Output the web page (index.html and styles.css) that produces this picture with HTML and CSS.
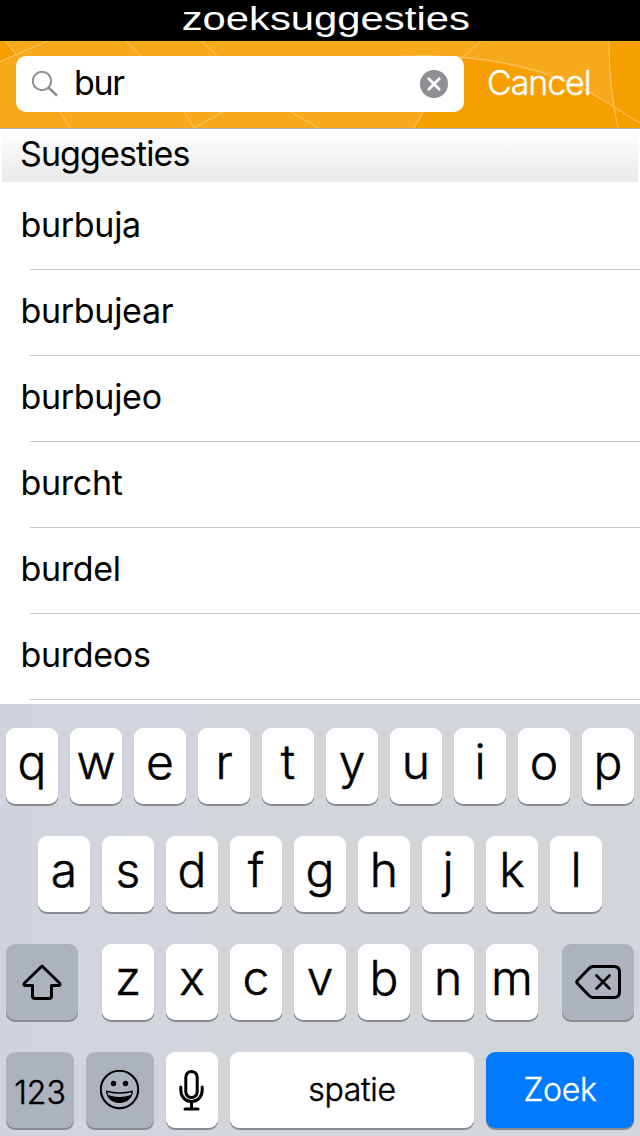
FILE: index.html
```html
<!DOCTYPE html>
<html lang="nl">
<head>
    <meta charset="UTF-8">
    <meta name="viewport" content="width=device-width, initial-scale=1.0">
    <title>zoeksuggesties</title>
    <link rel="stylesheet" href="styles.css">
</head>
<body>
    <div class="title-bar"><h1>zoeksuggesties</h1></div>

    <div class="search-bar">
        <svg class="pattern" width="640" height="87" viewBox="0 41 640 87">
            <rect y="41" width="640" height="87" fill="#f7a91c"/>
            <path d="M0 41H5L16 54L0 61Z" fill="#f59f00"/>
            <path d="M414 128L460 58Q545 67 614 107L640 123V128Z" fill="#f59f00"/>
            <path d="M609 41H640V128H618Q609 90 609 41Z" fill="#f59f00"/>
            <path class="lines" d="M5 41L16 54L60 112L70 128M0 61.500L48 41M126 41L141 56L184 112L194 128L223 112M202 41L217 56L291 112L319 128M481 41L460 60L423 112L414 128M609 41Q609 88 618 128M392 56.500Q530 49 614 107L640 123"/>
        </svg>
        <div class="search-field">
            <svg class="search-icon" width="28" height="28" viewBox="0 0 28 28">
                <circle cx="10" cy="11" r="9.200"/>
                <path d="M16.500 17.500L25 25.800"/>
            </svg>
            <span class="query">bur</span>
            <svg class="clear-icon" width="28" height="28" viewBox="0 0 28 28">
                <circle cx="14" cy="14" r="14"/>
                <path d="M8.800 8.800L19.200 19.200M19.200 8.800L8.800 19.200"/>
            </svg>
        </div>
        <span class="cancel">Cancel</span>
    </div>

    <h2 class="section-title">Suggesties</h2>
    <ul class="suggestions">
        <li>burbuja</li>
        <li>burbujear</li>
        <li>burbujeo</li>
        <li>burcht</li>
        <li>burdel</li>
        <li>burdeos</li>
    </ul>

    <div class="keyboard">
        <div class="key-row">
            <div class="key">q</div><div class="key">w</div><div class="key">e</div><div class="key">r</div><div class="key">t</div><div class="key">y</div><div class="key">u</div><div class="key">i</div><div class="key">o</div><div class="key">p</div>
        </div>
        <div class="key-row">
            <div class="key">a</div><div class="key">s</div><div class="key">d</div><div class="key">f</div><div class="key">g</div><div class="key">h</div><div class="key">j</div><div class="key">k</div><div class="key">l</div>
        </div>
        <div class="key-row">
            <div class="key dark shift">
                <svg width="40" height="36" viewBox="0 0 40 36">
                    <path d="M20 2L37.500 19Q39 21.500 36 21.500H29.500V32Q29.500 34.500 27 34.500H13Q10.500 34.500 10.500 32V21.500H4Q1 21.500 2.500 19Z"/>
                </svg>
            </div>
            <div class="key">z</div><div class="key">x</div><div class="key">c</div><div class="key">v</div><div class="key">b</div><div class="key">n</div><div class="key">m</div>
            <div class="key dark delete">
                <svg width="46" height="36" viewBox="0 0 46 36">
                    <path d="M18 2.500H39Q44.500 2.500 44.500 8V28Q44.500 33.500 39 33.500H18Q16 33.500 14 31.500L2.500 19.500Q1 18 2.500 16.500L14 4.500Q16 2.500 18 2.500Z"/>
                    <path d="M21.500 11.500L34.500 24.500M34.500 11.500L21.500 24.500" stroke-width="2.600"/>
                </svg>
            </div>
        </div>
        <div class="key-row">
            <div class="key dark numbers">123</div>
            <div class="key dark emoji">
                <svg width="40" height="40" viewBox="0 0 40 40">
                    <circle class="face" cx="19.500" cy="19.500" r="18.700"/>
                    <circle class="solid" cx="13.500" cy="13.500" r="2.700"/>
                    <circle class="solid" cx="25.500" cy="13.500" r="2.700"/>
                    <path class="solid" d="M6 20.500Q19.500 24 33 20.500C33 28 27 33 19.500 33S6 28 6 20.500Z"/>
                    <path class="teeth" d="M7.500 22.300Q19.500 25.300 31.500 22.300L30.800 25Q19.500 29 8.200 25Z"/>
                </svg>
            </div>
            <div class="key mic">
                <svg width="26" height="42" viewBox="0 0 26 42">
                    <rect x="6.800" y="2.500" width="11.400" height="26" rx="5.700"/>
                    <path d="M1.800 18V21C1.800 28 6.500 32.500 12.500 32.500S23.200 28 23.200 21V18M12.500 33V40M6 40H19"/>
                </svg>
            </div>
            <div class="key space">spatie</div>
            <div class="key blue">Zoek</div>
        </div>
    </div>
</body>
</html>
```
FILE: styles.css
```css
* {
    box-sizing: border-box;
}
body {
    margin: 0;
    width: 640px;
    height: 1136px;
    overflow: hidden;
    background-color: #fff;
    color: #000;
    font-family: Inter, "Liberation Sans", sans-serif;
    font-size: 34px;
}
.title-bar {
    height: 41px;
    padding-left: 12px;
    background-color: #000;
    color: #fff;
    display: flex;
    justify-content: center;
}
.title-bar h1 {
    margin: 0;
    font: 33px/37px "Liberation Sans", Arial, sans-serif;
    transform: scaleX(1.267);
}
.search-bar {
    position: relative;
    height: 88px;
    padding: 15px 16px 0;
    display: flex;
    gap: 23px;
    border-bottom: 1px solid #b2b2b2;
}
.pattern {
    position: absolute;
    top: 0;
    left: 0;
    z-index: -1;
}
.pattern .lines {
    fill: none;
    stroke: #fbc76a;
}
.search-field {
    width: 448px;
    height: 56px;
    padding: 0 16px;
    display: flex;
    align-items: center;
    background-color: #fff;
    border-radius: 10px;
}
.search-icon {
    fill: none;
    stroke: #8e8e93;
    stroke-width: 2;
}
.search-icon path {
    stroke-width: 2.6;
}
.query {
    flex: 1;
    height: 56px;
    margin-left: 14px;
    line-height: 53px;
    letter-spacing: -1.3px;
}
.clear-icon {
    fill: #8e8e93;
}
.clear-icon path {
    stroke: #fff;
    stroke-width: 2.8;
    stroke-linecap: round;
}
.cancel {
    color: #fff;
    font-weight: 300;
    line-height: 53px;
    letter-spacing: -1.1px;
    -webkit-text-stroke: 0.4px #fff;
}
.section-title {
    height: 52px;
    margin: 1px 2px 2px;
    padding-left: 18px;
    font-size: 34px;
    font-weight: 400;
    line-height: 47px;
    letter-spacing: -0.9px;
    background: linear-gradient(#fff, #e9e9e9);
}
.suggestions {
    height: 520px;
    margin: 0;
    padding: 0 0 0 30px;
    list-style: none;
}
.suggestions li {
    height: 86px;
    line-height: 81px;
    letter-spacing: -0.3px;
    text-indent: -9.5px;
    border-bottom: 1px solid #c8c7cc;
}
.keyboard {
    height: 432px;
    padding: 24px 6px 0;
    display: flex;
    flex-direction: column;
    gap: 32px;
    background: linear-gradient(90deg, #d0d4de, #d2d5da 35%);
}
.key-row {
    display: flex;
    justify-content: center;
    gap: 12px;
}
.key {
    width: 52px;
    height: 76px;
    display: flex;
    justify-content: center;
    font-size: 48px;
    font-weight: 300;
    line-height: 67px;
    -webkit-text-stroke: 0.5px #000;
    background-color: #fff;
    border-radius: 9px;
    box-shadow: 0 2px 0 #898b8f;
}
.key svg {
    fill: none;
    stroke: #000;
    stroke-width: 3;
    stroke-linecap: round;
    stroke-linejoin: round;
}
.key .face {
    stroke-width: 2;
}
.key .solid {
    fill: #000;
    stroke: none;
}
.key .teeth {
    fill: #acb3be;
    stroke: none;
}
.dark {
    background-color: #acb3bd;
}
.shift, .delete {
    width: 72px;
    align-items: center;
}
.shift {
    margin-right: 12px;
}
.delete {
    margin-left: 12px;
}
.numbers, .emoji {
    width: 68px;
}
.numbers {
    font-size: 32px;
    line-height: 81px;
}
.emoji, .mic {
    align-items: center;
}
.space, .blue {
    font-size: 32px;
    line-height: 75px;
    letter-spacing: -0.3px;
}
.space {
    width: 244px;
}
.blue {
    width: 148px;
    background-color: #007aff;
    color: #fff;
    -webkit-text-stroke: 0.4px #fff;
}
```
